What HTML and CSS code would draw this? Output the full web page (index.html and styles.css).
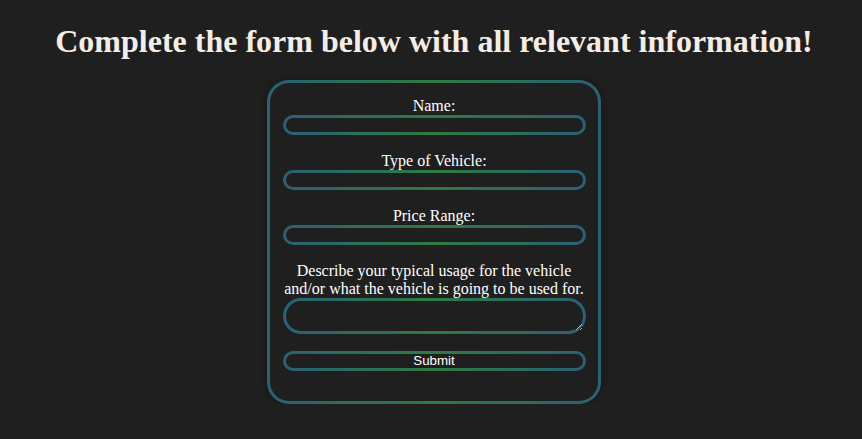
FILE: index.html
```html
<!DOCTYPE html>
<html lang="en">
<head>
<meta charset="utf-8">
<title>Vehicle Form</title>
<link rel="stylesheet" href="styles.css">
</head>
<body>
<h1 class="title">Complete the form below with all relevant information!</h1>
<form class="card">
  <label class="label" for="name">Name:</label>
  <input class="field" id="name" type="text">
  <label class="label" for="type">Type of Vehicle:</label>
  <input class="field" id="type" type="text">
  <label class="label" for="price">Price Range:</label>
  <input class="field" id="price" type="text">
  <label class="label" for="usage">Describe your typical usage for the vehicle and/or what the vehicle is going to be used for.</label>
  <textarea class="field area" id="usage"></textarea>
  <button class="field submit" type="button">Submit</button>
</form>
</body>
</html>
```
FILE: styles.css
```css
html, body {
  background: #1f1f1f;
}
body {
  margin: 0;
  padding: 2px 0 0 6px;
  font-family: "Liberation Serif", "Times New Roman", serif;
  color: #ffffff;
}
.title {
  margin: 21.44px 0 19.44px;
  font-size: 32px;
  font-weight: bold;
  text-align: center;
  color: #f3ede6;
}
.card {
  box-sizing: border-box;
  width: 334px;
  margin: 0 auto;
  padding: 14px 0 30px;
  display: flex;
  flex-direction: column;
  align-items: center;
  border: 3px solid transparent;
  border-radius: 22px;
  background:
    linear-gradient(#1f1f1f, #1f1f1f) padding-box,
    linear-gradient(to right, #2b6174, #2b7c42, #2b6174) border-box;
  box-shadow: 0 0 10px rgba(0, 0, 0, 0.35);
}
.label {
  display: block;
  width: 303px;
  font-size: 16px;
  line-height: 18px;
  text-align: center;
  margin-top: 17px;
}
.label:first-child {
  margin-top: 0;
}
.field {
  box-sizing: border-box;
  width: 303px;
  height: 20px;
  margin: 0;
  padding: 1px 8px;
  border: 3px solid transparent;
  border-radius: 10px;
  color: #ffffff;
  outline: none;
  background:
    linear-gradient(#1f1f1f, #1f1f1f) padding-box,
    linear-gradient(to right, #2b6174, #2b7c42, #2b6174) border-box;
}
.area {
  height: 36px;
  border-radius: 18px;
  resize: vertical;
}
.submit {
  margin-top: 17px;
  padding: 0;
  font-family: "Liberation Sans", Arial, sans-serif;
  font-size: 13.33px;
  line-height: 14px;
  color: #ffffff;
  cursor: pointer;
}
```
